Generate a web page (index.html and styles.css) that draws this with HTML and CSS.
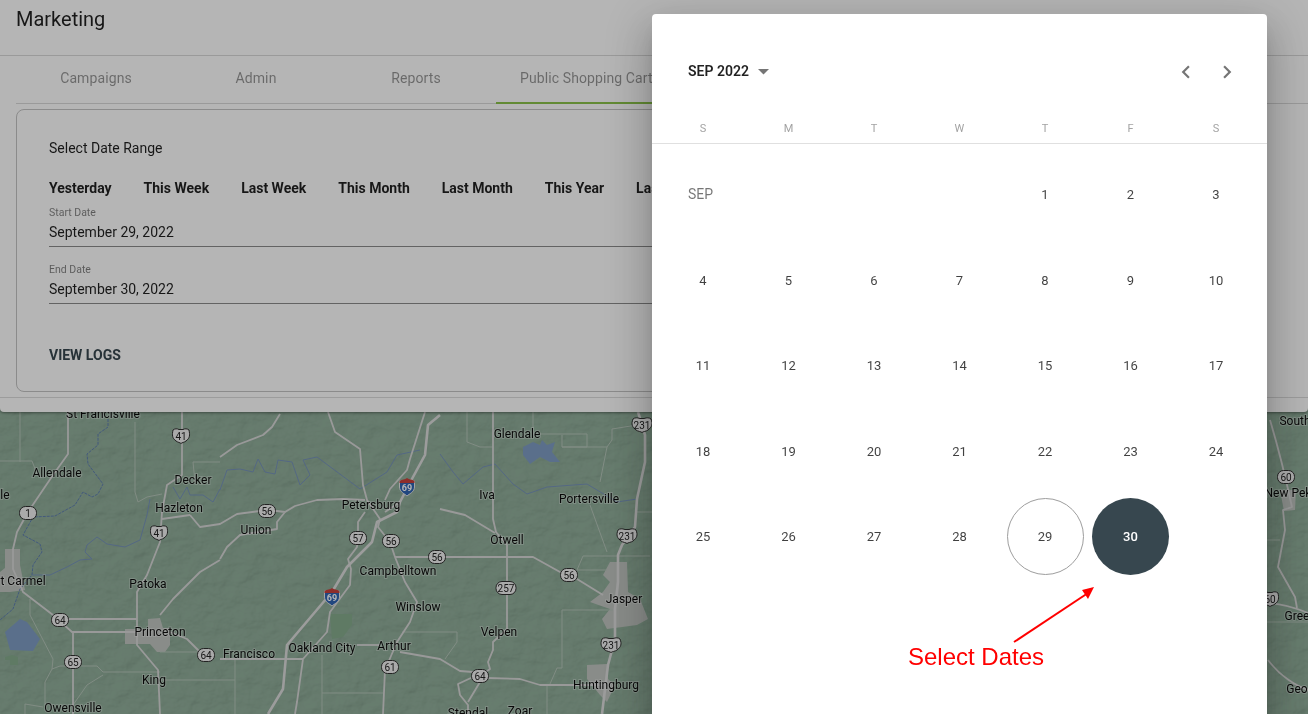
FILE: index.html
```html
<!DOCTYPE html>
<html lang="en">
<head>
<meta charset="utf-8">
<title>Marketing</title>
<link rel="stylesheet" href="styles.css">
</head>
<body>
<div class="stage">
  <svg class="map" viewBox="0 0 1308 714" width="1308" height="714" aria-hidden="true">
    <defs>
      <filter id="hills" x="0" y="0" width="100%" height="100%">
        <feTurbulence type="fractalNoise" baseFrequency="0.05 0.07" numOctaves="4" seed="11" result="n"/>
        <feDiffuseLighting in="n" surfaceScale="4" lighting-color="#ffffff">
          <feDistantLight azimuth="225" elevation="62"/>
        </feDiffuseLighting>
      </filter>
      <rect id="st" x="-8.500" y="-6.500" width="17" height="13" rx="6" class="shield"/>
      <rect id="st3" x="-10" y="-6.500" width="20" height="13" rx="6" class="shield"/>
      <path id="us" class="shield" d="M-8-6C-6-7.500-4-7.500-2-6.500H2C4-7.500 6-7.500 8-6 9-1 9 2 5 5 3 6.500 1 6.500 0 7.500-1 6.500-3 6.500-5 5-9 2-9-1-8-6z"/>
      <path id="us3" class="shield" d="M-9-6C-7-7.500-5-7.500-2-6.500H2C5-7.500 7-7.500 9-6 11-1 10 2 6 5 4 6.500 1 6.500 0 7.500-1 6.500-4 6.500-6 5-10 2-11-1-9-6z"/>
      <g id="i69">
        <path class="i-blue" d="M-7.500-5H7.500V1C7.500 6 2 8 0 10-2 8-7.500 6-7.500 1z"/>
        <path class="i-red" d="M-7.500-5C-5-7-2-6 0-8 2-6 5-7 7.500-5V-3H-7.500z"/>
      </g>
    </defs>
    <rect width="1308" height="714" class="land"/>
    <rect width="1308" height="714" filter="url(#hills)" class="relief"/>

    <g class="city">
      <path d="M5 549H20V565L25 590 10 592H0V572L5 568z"/>
      <path d="M125 629H148V619L160 618 163 628H170V645L165 652 157 652 150 644H125z"/>
      <path d="M610 562H627L628 592 640 599 648 619 637 625 607 629 602 619 610 609 590 602 603 592 610 582 603 575z"/>
      <path d="M587 665 607 664 608 679 615 685 607 702 600 695 587 679z"/>
      <path d="M1280 490H1296L1295 510 1284 511z"/>
    </g>

    <g class="water">
      <path d="M20 619 27 622 40 639 33 651 10 650 5 632z"/>
      <path d="M523 447 533 442 540 445 542 440 547 445 555 442 552 452 560 462 550 462 540 457 530 464 523 455z"/>
    </g>
    <g class="park">
      <path d="M330 614H352V625L343 637 332 639z"/>
      <path d="M5 657 12 655 18 657V665H10V660H5z"/>
    </g>

    <g class="river">
      <path class="dash" d="M108 419V427L98 434V445L87 454 88 464 103 484 98 494 92 497 83 492 75 505 55 516 33 517 23 535 40 544 42 552 33 565 32 575 20 589 13 609 0 620"/>
      <path d="M32 575H50L67 567 80 560 92 559 85 552 87 545 97 537 107 544 125 547 140 540 147 515 150 499"/>
      <path d="M173 487 180 499 187 487 190 495H203L213 502 220 489"/>
      <path d="M220 490 227 470 240 469 253 472 258 459 265 472 275 474 278 460 292 462 300 485 310 475 303 460 317 457 360 489 387 472 397 455 420 450"/>
      <path d="M440 454 453 472 463 484 483 467 495 464 513 484 527 494 547 487 587 484 617 502 637 499"/>
    </g>

    <g class="road-thin">
      <path d="M20 412V462"/>
      <path d="M0 461H32L37 474"/>
      <path d="M135 422V492L138 502 147 497 162 494"/>
      <path d="M193 462H220"/>
      <path d="M193 462 195 482"/>
      <path d="M30 599V615L53 659 52 669"/>
      <path d="M52 669 60 666H97L103 672H160"/>
      <path d="M52 669 45 682V705"/>
      <path d="M25 714V704L43 707"/>
      <path d="M103 675 87 685 73 705"/>
      <path d="M160 652H198"/>
      <path d="M160 680H220"/>
      <path d="M220 680H235"/>
      <path d="M235 659V714"/>
      <path d="M322 655V714"/>
      <path d="M322 693H383"/>
      <path d="M402 632H457V642L445 659"/>
      <path d="M467 412V442L480 447H493"/>
      <path d="M533 412V434H587V447H562V435"/>
      <path d="M562 447H607L612 440V429L637 425"/>
      <path d="M607 447 600 482"/>
      <path d="M590 505 607 552"/>
      <path d="M583 556H650"/>
      <path d="M583 556 577 570H607"/>
      <path d="M562 610H613"/>
      <path d="M562 610V668H557L550 684"/>
      <path d="M547 685V714"/>
      <path d="M637 512H652"/>
      <path d="M1267 622H1308"/>
      <path d="M1267 540H1280"/>
    </g>

    <g class="road">
      <path d="M68 412V454L53 475 28 512 17 532 13 549V569L23 592 53 615 72 632H137"/>
      <path d="M68 619H137"/>
      <path d="M73 632V714"/>
      <path d="M182 412V475L167 485 162 512 160 542 147 575 137 592V645L158 670 160 714"/>
      <path d="M162 519 190 515"/>
      <path d="M190 515 200 527 220 524 237 514 260 511H277L285 512 277 522V529L240 535 227 547 220 559"/>
      <path d="M220 457 237 445 263 435 272 427 280 414"/>
      <path d="M285 512 295 506 317 500 343 499 365 500"/>
      <path d="M328 412 335 432 360 449 363 485 367 500 380 519 378 527 390 542 395 557 405 582 417 602 410 622 397 642 385 670 383 714"/>
      <path d="M425 412 410 459 407 470 390 489 385 500"/>
      <path d="M365 512 358 522V532L357 547 348 559 351 569 350 585 330 612 327 632 303 659 297 702 295 714"/>
      <path d="M220 659H303"/>
      <path d="M357 645H380"/>
      <path d="M400 652 440 659 460 671 473 672 487 678 520 679 540 685H580L606 685"/>
      <path d="M395 557H533L560 572 577 579 603 595"/>
      <path d="M160 615 173 599 200 572 220 560"/>
      <path d="M170 632 187 639 200 652"/>
      <path d="M493 412V519L496 532 507 545V629L493 642V650L488 662 490 669 480 676"/>
      <path d="M440 509 465 515 495 533"/>
      <path d="M473 677 458 684 460 695 468 705V714"/>
      <path d="M480 682 468 702"/>
      <path d="M400 502 385 512"/>
      <path d="M1270 420C1276 440 1284 470 1292 507L1283 510 1285 530 1278 567 1295 597 1297 608"/>
      <path d="M1268 603C1284 604 1296 608 1308 613"/>
      <path d="M1268 660C1280 676 1296 686 1308 690"/>
    </g>
    <path class="highway" d="M440 415 428 425 425 455 413 477 400 502 397 512 377 522 372 542 347 567 332 592 287 645 283 689 268 714"/>
    <path class="highway" d="M638 412 645 435V462L637 499 635 527 622 545 618 555V582L615 609V639L608 665 602 714"/>

    <g class="shields">
      <g transform="translate(181 436)"><use href="#us"/><text>41</text></g>
      <g transform="translate(642 425)"><use href="#us3"/><text>231</text></g>
      <g transform="translate(28 513)"><use href="#st"/><text>1</text></g>
      <g transform="translate(159 533)"><use href="#us"/><text>41</text></g>
      <g transform="translate(267 511)"><use href="#st"/><text>56</text></g>
      <g transform="translate(358 538)"><use href="#st"/><text>57</text></g>
      <g transform="translate(391 541)"><use href="#st"/><text>56</text></g>
      <g transform="translate(437 557)"><use href="#st"/><text>56</text></g>
      <g transform="translate(569 575)"><use href="#st"/><text>56</text></g>
      <g transform="translate(506 588)"><use href="#st3"/><text>257</text></g>
      <g transform="translate(627 536)"><use href="#us3"/><text>231</text></g>
      <g transform="translate(611 645)"><use href="#us3"/><text>231</text></g>
      <g transform="translate(60 620)"><use href="#st"/><text>64</text></g>
      <g transform="translate(206 655)"><use href="#st"/><text>64</text></g>
      <g transform="translate(480 676)"><use href="#st"/><text>64</text></g>
      <g transform="translate(73 662)"><use href="#st"/><text>65</text></g>
      <g transform="translate(390 667)"><use href="#st"/><text>61</text></g>
      <g transform="translate(1286 477)"><use href="#st"/><text>60</text></g>
      <g transform="translate(1270 599)"><use href="#us"/><text>60</text></g>
    </g>
    <g class="interstate">
      <g transform="translate(407 486)"><use href="#i69"/><text y="2">69</text></g>
      <g transform="translate(332 596)"><use href="#i69"/><text y="2">69</text></g>
    </g>

    <g class="labels">
      <text x="103" y="414">St Francisville</text>
      <text x="517" y="434">Glendale</text>
      <text x="57" y="473">Allendale</text>
      <text x="193" y="480">Decker</text>
      <text x="5" y="495">le</text>
      <text x="179" y="508">Hazleton</text>
      <text x="371" y="505">Petersburg</text>
      <text x="487" y="495">Iva</text>
      <text x="589" y="499">Portersville</text>
      <text x="256" y="530">Union</text>
      <text x="507" y="540">Otwell</text>
      <text x="398" y="571">Campbelltown</text>
      <text x="23" y="581">t Carmel</text>
      <text x="148" y="584">Patoka</text>
      <text x="624" y="599">Jasper</text>
      <text x="418" y="607">Winslow</text>
      <text x="160" y="632">Princeton</text>
      <text x="499" y="632">Velpen</text>
      <text x="249" y="654">Francisco</text>
      <text x="322" y="648">Oakland City</text>
      <text x="394" y="646">Arthur</text>
      <text x="154" y="680">King</text>
      <text x="73" y="708">Owensville</text>
      <text x="606" y="685">Huntingburg</text>
      <text x="468" y="713">Stendal</text>
      <text x="520" y="711">Zoar</text>
      <text x="1295" y="421">South</text>
      <text x="1288" y="493">New Pek</text>
      <text x="1297" y="616">Gree</text>
      <text x="1297" y="689">Geo</text>
    </g>
  </svg>

  <section class="panel">
    <h1 class="title">Marketing</h1>
    <div class="tabs-wrap">
      <nav class="tabs">
        <span class="tab">Campaigns</span>
        <span class="tab">Admin</span>
        <span class="tab">Reports</span>
        <span class="tab tab-active">Public Shopping Cart</span>
      </nav>
    </div>
    <div class="card">
      <p class="card-heading">Select Date Range</p>
      <div class="quick">
        <span>Yesterday</span><span>This Week</span><span>Last Week</span><span>This Month</span><span>Last Month</span><span>This Year</span><span>Last Year</span>
      </div>
      <div class="field">
        <label class="field-label">Start Date</label>
        <div class="field-value">September 29, 2022</div>
      </div>
      <div class="field">
        <label class="field-label">End Date</label>
        <div class="field-value">September 30, 2022</div>
      </div>
      <div class="logs">VIEW LOGS</div>
    </div>
    <div class="panel-foot"></div>
  </section>

  <div class="scrim"></div>

  <aside class="dialog">
    <header class="cal-head">
      <div class="month-btn">SEP 2022
        <svg class="caret" width="11" height="6" viewBox="0 0 11 6"><path d="M0 0h11L5.500 5.500z"/></svg>
      </div>
      <div class="nav">
        <svg width="26" height="26" viewBox="0 0 24 24"><path d="M15.410 7.410 14 6l-6 6 6 6 1.410-1.410L10.830 12z"/></svg>
        <svg width="26" height="26" viewBox="0 0 24 24"><path d="M10 6 8.590 7.410 13.170 12l-4.580 4.590L10 18l6-6z"/></svg>
      </div>
    </header>
    <div class="weekdays"><span>S</span><span>M</span><span>T</span><span>W</span><span>T</span><span>F</span><span>S</span></div>
    <div class="days">
      <span class="day month-label">SEP</span><span></span><span></span><span></span>
      <span class="day">1</span><span class="day">2</span><span class="day">3</span>
      <span class="day">4</span><span class="day">5</span><span class="day">6</span><span class="day">7</span><span class="day">8</span><span class="day">9</span><span class="day">10</span>
      <span class="day">11</span><span class="day">12</span><span class="day">13</span><span class="day">14</span><span class="day">15</span><span class="day">16</span><span class="day">17</span>
      <span class="day">18</span><span class="day">19</span><span class="day">20</span><span class="day">21</span><span class="day">22</span><span class="day">23</span><span class="day">24</span>
      <span class="day">25</span><span class="day">26</span><span class="day">27</span><span class="day">28</span>
      <span class="day"><b class="circle circle-start">29</b></span>
      <span class="day"><b class="circle circle-end">30</b></span>
    </div>
    <svg class="callout-arrow" width="90" height="62" viewBox="0 0 90 62"><path d="M2 59 76 10" /><path class="head" d="M82 4 70 7 76 16z"/></svg>
    <div class="callout">Select Dates</div>
  </aside>
</div>
</body>
</html>
```
FILE: styles.css
```css
* { box-sizing: border-box; }
html, body { margin: 0; height: 100%; }
body { overflow: hidden; font-family: Roboto, "Liberation Sans", sans-serif; color: rgba(0,0,0,.87); background: #fff; }
.stage { position: relative; width: 1308px; height: 714px; overflow: hidden; }

/* map canvas */
.map { position: absolute; inset: 0; display: block; }
.land { fill: #92b09c; }
.relief { opacity: .26; mix-blend-mode: multiply; }
.city path { fill: #c2c6c2; }
.water path { fill: #7f9dc4; }
.park path { fill: #86ad8e; }
.river path { fill: none; stroke: #7793ba; stroke-width: 1; stroke-linejoin: round; }
.river .dash { stroke: #5f7fb0; stroke-dasharray: 3 1; }
.road path { fill: none; stroke: #d8d8d8; stroke-width: 1.800; stroke-linejoin: round; }
.road-thin path { fill: none; stroke: #b6c6ba; stroke-width: 1; stroke-linejoin: round; }
.highway { fill: none; stroke: #dcdcdc; stroke-width: 2.600; stroke-linejoin: round; }
.shield { fill: #f0f0f0; stroke: #303030; stroke-width: 1; }
.shields text { font: 10px Roboto, sans-serif; fill: #222; text-anchor: middle; dominant-baseline: central; }
.i-blue { fill: #2f64b4; stroke: #e8e8e8; stroke-width: 1; }
.i-red { fill: #c8403c; }
.interstate text { font: 700 9px Roboto, sans-serif; fill: #fff; text-anchor: middle; dominant-baseline: central; }
.labels text { font: 12px Roboto, sans-serif; fill: #0c0c0c; text-anchor: middle; dominant-baseline: central; paint-order: stroke; stroke: rgba(255,255,255,.3); stroke-width: 2px; }

/* page panel behind the dialog */
.panel { position: relative; height: 412px; background: #fff; border-radius: 0 0 4px 4px; box-shadow: 0 1px 3px rgba(0,0,0,.4); }
.title { margin: 0; height: 56px; padding: 7px 16px 0; font-size: 20px; font-weight: 400; line-height: 24px; border-bottom: 1px solid #d9d9d9; }
.tabs-wrap { padding-left: 16px; }
.tabs { display: flex; height: 48px; border-bottom: 1px solid #d9d9d9; }
.tab { display: flex; align-items: center; justify-content: center; min-width: 160px; height: 48px; padding: 0 24px 5px; font-size: 14px; letter-spacing: .1px; white-space: nowrap; color: rgba(0,0,0,.42); }
.tab-active { border-bottom: 2px solid #8bc34a; padding-bottom: 3px; }
.card { margin: 5px 100px 0 16px; height: 283px; padding: 30px 32px 0; border: 1px solid #c4c4c4; border-radius: 8px; }
.card-heading { margin: 0; font-size: 14px; line-height: 16px; }
.quick { display: flex; gap: 32px; margin-top: 24px; font-size: 14px; line-height: 16px; font-weight: 700; white-space: nowrap; }
.field { height: 57px; }
.quick + .field { margin-top: 2px; }
.field-label { display: block; padding-top: 9px; font-size: 10.500px; line-height: 12px; color: rgba(0,0,0,.5); }
.field-value { height: 28px; padding-top: 3px; font-size: 14px; line-height: 20px; border-bottom: 1px solid #8c8c8c; }
.logs { margin-top: 35px; font-size: 14px; line-height: 16px; font-weight: 700; color: #37474f; }
.panel-foot { margin-top: 5px; border-top: 1px solid #dcdcdc; }

.scrim { position: absolute; inset: 0; background: rgba(0,0,0,.29); }

/* date picker dialog */
.dialog { position: absolute; left: 652px; top: 14px; width: 615px; height: 720px; background: #fff; border-radius: 4px; box-shadow: 0 11px 15px -7px rgba(0,0,0,.2), 0 24px 38px 3px rgba(0,0,0,.14), 0 9px 46px 8px rgba(0,0,0,.12); }
.cal-head { display: flex; align-items: center; justify-content: space-between; height: 116px; padding: 0 27px 0 36px; }
.month-btn { display: flex; align-items: center; gap: 9px; padding-bottom: 2px; font-size: 14px; font-weight: 600; color: rgba(0,0,0,.87); }
.caret { margin-top: 2px; }
.caret path { fill: #757575; }
.nav { display: flex; gap: 15px; }
.nav path { fill: #757575; }
.weekdays { display: grid; grid-template-columns: repeat(7, 85.500px); height: 22px; margin-top: -8px; padding: 0 0 7px 8.250px; font-size: 11px; line-height: 14px; color: #a3a3a3; text-align: center; border-bottom: 1px solid #e0e0e0; }
.days { display: grid; grid-template-columns: repeat(7, 85.500px); grid-auto-rows: 85.500px; padding: 8px 0 0 8.250px; }
.day { display: flex; align-items: center; justify-content: center; font-size: 13px; color: rgba(0,0,0,.75); }
.month-label { justify-content: flex-start; padding: 0 0 2px 27.750px; font-size: 14px; color: rgba(0,0,0,.54); }
.circle { display: flex; align-items: center; justify-content: center; width: 77px; height: 77px; border-radius: 50%; font-weight: 400; }
.circle-start { border: 1px solid #9e9e9e; }
.circle-end { background: #37474f; color: #fff; font-weight: 500; }
.callout { position: absolute; left: 256px; top: 629px; font: 24px/28px "Liberation Sans", Arial, sans-serif; color: #f00; white-space: nowrap; }
.callout-arrow { position: absolute; left: 360px; top: 569px; }
.callout-arrow path { fill: none; stroke: #f00; stroke-width: 2; }
.callout-arrow .head { fill: #f00; stroke: none; }
```
